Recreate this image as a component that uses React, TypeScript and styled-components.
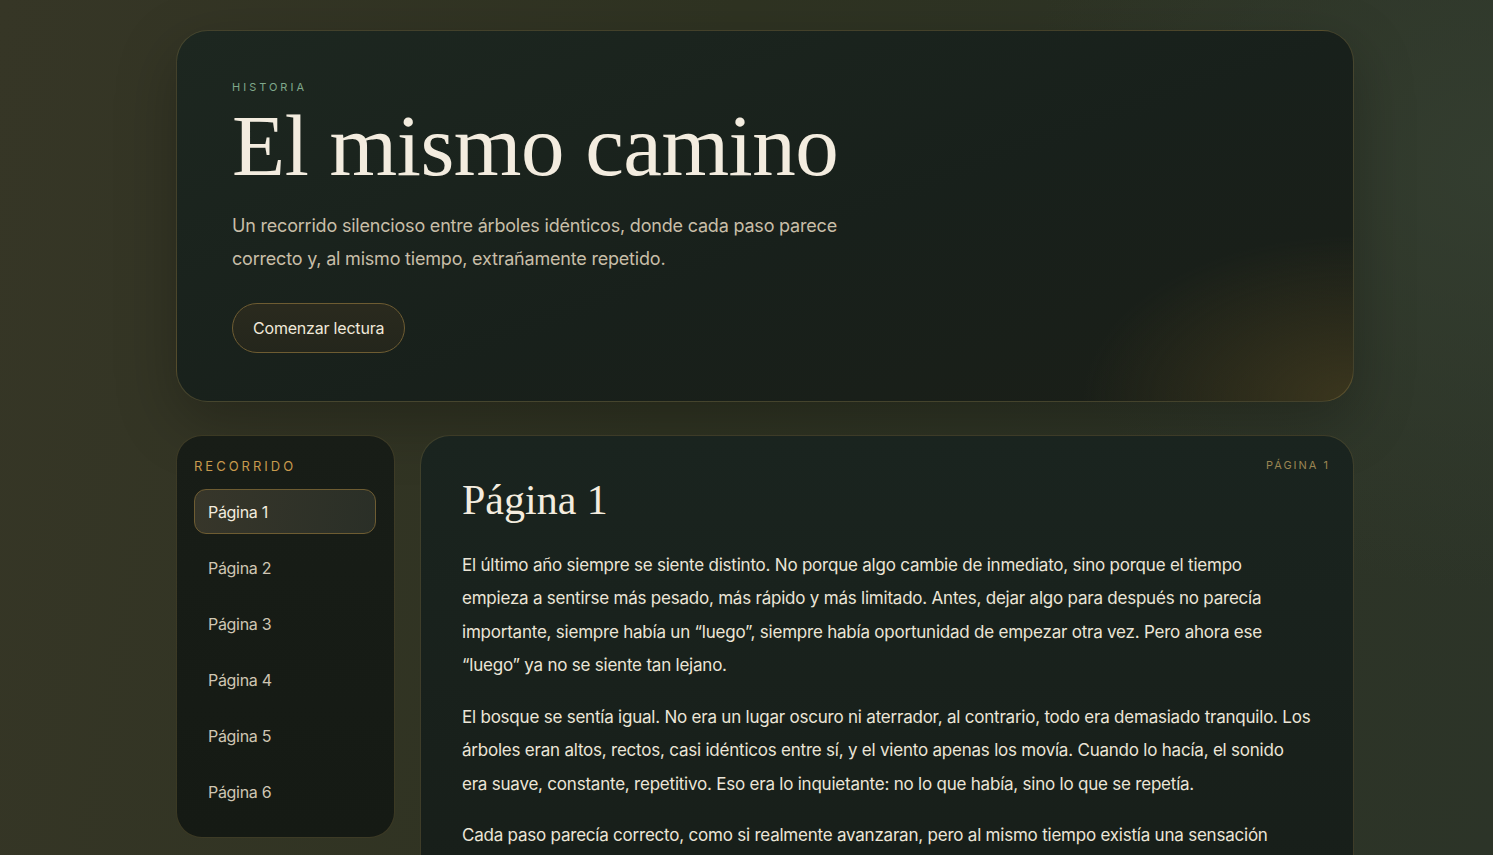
import styled, { createGlobalStyle } from 'styled-components'
import { useState } from 'react'

const GlobalStyle = createGlobalStyle`
  html, body {
    margin: 0;
    padding: 0;
  }
  body {
    min-height: 100vh;
    background:
      radial-gradient(ellipse 700px 600px at 100% 20%, rgba(52, 62, 48, 0.9), transparent 70%),
      linear-gradient(100deg, #363626 0%, #2f3322 45%, #2c3428 100%);
    background-attachment: fixed;
    color: #ece6d8;
    font-family: Inter, "Noto Sans", sans-serif;
    overflow: hidden;
  }
`

const Page = styled.div`
  padding: 30px 139px 0 176px;
  display: flex;
  flex-direction: column;
  gap: 33px;
`

const Hero = styled.section`
  border-radius: 32px;
  border: 1px solid rgba(150, 128, 74, 0.35);
  background:
    radial-gradient(ellipse 360px 220px at 100% 100%, rgba(70, 62, 32, 0.75), transparent 75%),
    linear-gradient(160deg, #1d2720 0%, #18201b 55%, #1a1e17 100%);
  padding: 49px 56px 48px 55px;
  box-shadow: 0 20px 60px rgba(0, 0, 0, 0.25);
`

const Eyebrow = styled.div`
  font-size: 11px;
  letter-spacing: 3px;
  color: #7fa88b;
  text-transform: uppercase;
`

const Title = styled.h1`
  margin: 6px 0 18px;
  font-family: "Liberation Serif", "DejaVu Serif", serif;
  font-weight: 400;
  font-size: 87px;
  line-height: 1.05;
  letter-spacing: -0.5px;
  color: #f3ecdf;
`

const Lead = styled.p`
  margin: 0 0 28px;
  max-width: 620px;
  font-size: 18px;
  line-height: 33px;
  letter-spacing: -0.2px;
  color: #c8bea8;
`

const StartButton = styled.button`
  height: 50px;
  padding: 0 20px;
  border-radius: 999px;
  border: 1px solid #6e5c32;
  background: linear-gradient(180deg, #2a2a1e, #24261c);
  color: #f0e9da;
  font-family: inherit;
  font-size: 16px;
  letter-spacing: -0.2px;
  cursor: pointer;
`

const Body = styled.div`
  display: grid;
  grid-template-columns: 219px 1fr;
  gap: 25px;
  align-items: start;
`

const Sidebar = styled.nav`
  border-radius: 26px;
  border: 1px solid rgba(150, 128, 74, 0.3);
  background: linear-gradient(180deg, #181d17 0%, #151a14 100%);
  padding: 22px 18px 23px 17px;
`

const SideLabel = styled.div`
  font-size: 13px;
  letter-spacing: 3px;
  color: #c79a4d;
  margin-bottom: 15px;
`

const NavList = styled.div`
  display: flex;
  flex-direction: column;
  gap: 11px;
`

const NavItem = styled.button<{ $active?: boolean }>`
  height: 45px;
  text-align: left;
  padding: 0 13px;
  border-radius: 12px;
  border: 1px solid ${p => (p.$active ? '#6e5c32' : 'transparent')};
  background: ${p => (p.$active ? 'linear-gradient(100deg, #37362a 0%, #2a2f27 100%)' : 'transparent')};
  color: ${p => (p.$active ? '#f3ecdf' : '#cfc6b3')};
  font-family: inherit;
  font-size: 16px;
  letter-spacing: -0.3px;
  cursor: pointer;
`

const Reader = styled.article`
  position: relative;
  border-radius: 30px 30px 0 0;
  border: 1px solid rgba(150, 128, 74, 0.3);
  border-bottom: none;
  background: linear-gradient(180deg, #1a241f 0%, #171d18 100%);
  padding: 41px 42px 40px 41px;
  min-height: 480px;
`

const PageTag = styled.div`
  position: absolute;
  top: 22px;
  right: 23px;
  font-size: 11px;
  letter-spacing: 2px;
  color: #9a8552;
`

const PageTitle = styled.h2`
  margin: 0 0 25px;
  font-family: "Liberation Serif", "DejaVu Serif", serif;
  font-weight: 400;
  font-size: 42px;
  line-height: 1.1;
  color: #f3ecdf;
`

const Paragraph = styled.p`
  margin: 0 0 18px;
  max-width: 850px;
  font-size: 17px;
  line-height: 33.5px;
  letter-spacing: -0.22px;
  color: #ebe5d7;
`

const pages = ['Página 1', 'Página 2', 'Página 3', 'Página 4', 'Página 5', 'Página 6']

const text = [
  'El último año siempre se siente distinto. No porque algo cambie de inmediato, sino porque el tiempo empieza a sentirse más pesado, más rápido y más limitado. Antes, dejar algo para después no parecía importante, siempre había un “luego”, siempre había oportunidad de empezar otra vez. Pero ahora ese “luego” ya no se siente tan lejano.',
  'El bosque se sentía igual. No era un lugar oscuro ni aterrador, al contrario, todo era demasiado tranquilo. Los árboles eran altos, rectos, casi idénticos entre sí, y el viento apenas los movía. Cuando lo hacía, el sonido era suave, constante, repetitivo. Eso era lo inquietante: no lo que había, sino lo que se repetía.',
  'Cada paso parecía correcto, como si realmente avanzaran, pero al mismo tiempo existía una sensación extraña, como si el camino no terminara nunca.',
]

const App = () => {
  const [current, setCurrent] = useState(0)
  return (
    <>
      <GlobalStyle />
      <Page>
        <Hero>
          <Eyebrow>Historia</Eyebrow>
          <Title>El mismo camino</Title>
          <Lead>
            Un recorrido silencioso entre árboles idénticos, donde cada paso parece
            correcto y, al mismo tiempo, extrañamente repetido.
          </Lead>
          <StartButton onClick={() => setCurrent(0)}>Comenzar lectura</StartButton>
        </Hero>
        <Body>
          <Sidebar>
            <SideLabel>RECORRIDO</SideLabel>
            <NavList>
              {pages.map((p, i) => (
                <NavItem key={p} $active={i === current} onClick={() => setCurrent(i)}>
                  {p}
                </NavItem>
              ))}
            </NavList>
          </Sidebar>
          <Reader>
            <PageTag>PÁGINA {current + 1}</PageTag>
            <PageTitle>{pages[current]}</PageTitle>
            {text.map((t, i) => (
              <Paragraph key={i}>{t}</Paragraph>
            ))}
          </Reader>
        </Body>
      </Page>
    </>
  )
}

export default App
